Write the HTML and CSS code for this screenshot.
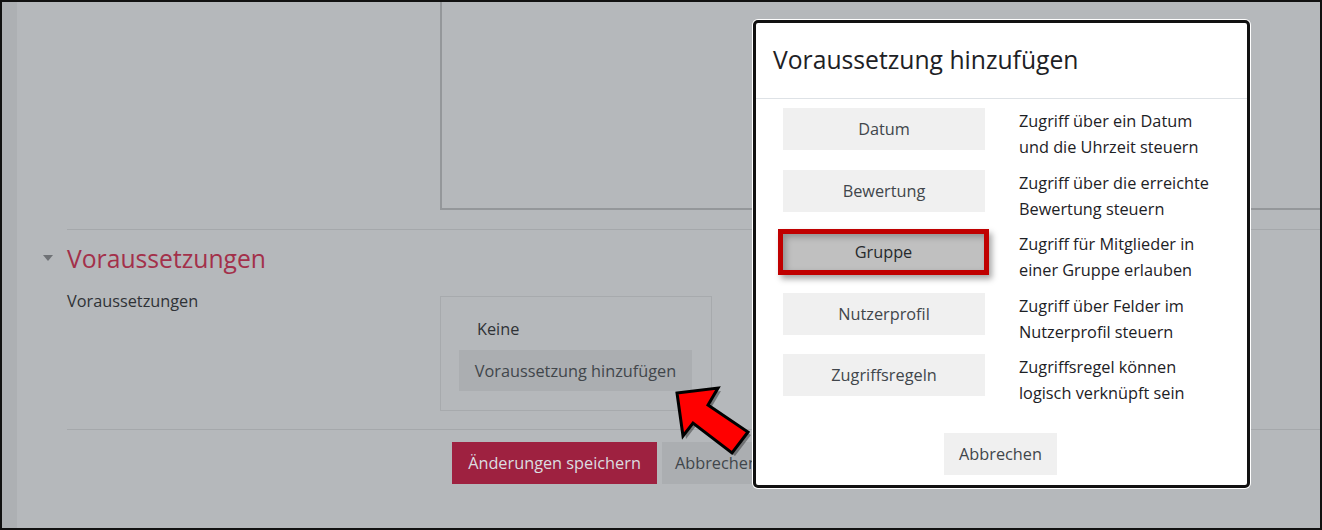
FILE: index.html
```html
<!DOCTYPE html>
<html lang="de">
<head>
    <meta charset="UTF-8">
    <title>Voraussetzung hinzufügen</title>
    <link rel="stylesheet" href="styles.css">
</head>
<body>
    <div class="frame">
        <div class="strip"></div>
        <div class="page">
            <div class="editor"></div>
            <hr class="sep">
            <div class="sec_head">
                <span class="caret"></span>
                <h3>Voraussetzungen</h3>
            </div>
            <div class="fitem">
                <div class="flabel">Voraussetzungen</div>
                <div class="avail">
                    <div class="none">Keine</div>
                    <div class="btn btn_add">Voraussetzung hinzufügen</div>
                </div>
            </div>
            <hr class="sep sep2">
            <div class="actions">
                <div class="btn btn_save">Änderungen speichern</div>
                <div class="btn btn_cancel">Abbrechen</div>
            </div>
        </div>

        <svg class="arrow" width="90" height="80" viewBox="0 0 90 80">
            <polygon class="arrow_shadow" points="10,14 51,9 41,26 81,53 65,74 26,44 16,57"/>
            <polygon points="7,11 48,6 38,23 78,50 62,71 23,41 13,54" fill="#ff0000" stroke="#000" stroke-width="3" stroke-linejoin="miter"/>
        </svg>

        <div class="modal">
            <div class="modal_head">Voraussetzung hinzufügen</div>
            <div class="modal_body">
                <div class="opt">
                    <div class="btn opt_btn">Datum</div>
                    <div class="opt_text">Zugriff über ein Datum<br>und die Uhrzeit steuern</div>
                </div>
                <div class="opt">
                    <div class="btn opt_btn">Bewertung</div>
                    <div class="opt_text">Zugriff über die erreichte<br>Bewertung steuern</div>
                </div>
                <div class="opt">
                    <div class="btn opt_btn marked">Gruppe</div>
                    <div class="opt_text">Zugriff für Mitglieder in<br>einer Gruppe erlauben</div>
                </div>
                <div class="opt">
                    <div class="btn opt_btn">Nutzerprofil</div>
                    <div class="opt_text">Zugriff über Felder im<br>Nutzerprofil steuern</div>
                </div>
                <div class="opt">
                    <div class="btn opt_btn">Zugriffsregeln</div>
                    <div class="opt_text">Zugriffsregel können<br>logisch verknüpft sein</div>
                </div>
            </div>
            <div class="modal_foot">
                <div class="btn foot_btn">Abbrechen</div>
            </div>
        </div>
    </div>
</body>
</html>
```

FILE: styles.css
```css
*{
    margin:0;padding:0;
    box-sizing: border-box;
}
html,body{
    width:100%;
    height:100%;
    background-color: #fff;
}
body{
    font-family: "Open Sans", "Noto Sans", sans-serif;
    font-size: 16.3px;
    color:#2f3236;
}
/* rahmen + abgedunkelte seite */
.frame{
    position: relative;
    display: flex;
    width:1322px;
    height:530px;
    border:2px solid #111;
    background-color: #b5b8bb;
    overflow: hidden;
}
.strip{
    width:15px;
    flex-shrink: 0;
    background-color: #adb0b3;
}
.page{
    flex:1;
    padding-left:50px;
}
.editor{
    margin-left:373px;
    margin-right:-4px;
    height:208px;
    border-left:2px solid #94979a;
    border-bottom:2px solid #94979a;
}
.sep{
    border:0;
    border-top:1px solid #a5a8ab;
    margin-top:19px;
}
.sep2{
    margin-top:18px;
}
.sec_head{
    display: flex;
    align-items: center;
    margin-left:-24px;
    margin-top:12px;
    height:32px;
}
.caret{
    width:0;height:0;
    border-left:5px solid transparent;
    border-right:5px solid transparent;
    border-top:6px solid #6f7276;
    margin-right:14px;
}
.sec_head h3{
    font-weight: normal;
    font-size: 24.7px;
    color:#a3304a;
}
.fitem{
    display: flex;
    margin-top:22px;
}
.flabel{
    width:373px;
    margin-top:-6px;
}
.avail{
    width:272px;
    height:115px;
    border:1px solid #a7aaad;
    padding:19px 18px 0 18px;
}
.none{
    padding-left:18px;
    line-height:26px;
}
.btn{
    display: flex;
    align-items: center;
    justify-content: center;
    height:42px;
    color:#41464b;
}
.btn_add{
    width:233px;
    height:41px;
    margin-top:8px;
    background-color: #abaeb1;
}
.actions{
    display: flex;
    gap:5px;
    margin-top:12px;
    padding-left:385px;
}
.btn_save{
    width:205px;
    background-color: #9e2140;
    color:#dcdde0;
}
.btn_cancel{
    width:110px;
    background-color: #abaeb1;
    justify-content: flex-start;
    padding-left:13px;
}
/* pfeil */
.arrow{
    position: absolute;
    left:668px;
    top:380px;
}
.arrow_shadow{
    fill: rgba(0,0,0,0.35);
}
/* dialog */
.modal{
    position: absolute;
    left:751px;
    top:18px;
    width:497px;
    height:468px;
    border:3px solid #111;
    border-radius: 5px;
    box-shadow: 0 0 0 1px #fff;
    background-color: #fff;
}
.modal_head{
    height:76px;
    padding:20px 0 0 17px;
    font-size: 24.7px;
    color:#1d2125;
    border-bottom:1px solid #dee2e6;
}
.modal_body{
    padding:9px 0 0 27px;
}
.opt{
    display: flex;
    height:61.5px;
}
.opt_btn{
    width:202px;
    background-color: #f0f0f0;
}
.marked{
    margin:-2px 0 0 -5px;
    width:211px;
    height:46px;
    border:5px solid #c00000;
    background-color: #c0c0c0;
    color:#26292c;
    box-shadow: inset 3px 3px 6px rgba(0,0,0,0.25), 3px 4px 6px rgba(0,0,0,0.35);
}
.marked + .opt_text{
    margin-left:30px;
}
.opt_text{
    margin-left:34px;
    margin-top:0;
    line-height:26px;
    color:#1d2125;
}
.modal_foot{
    display: flex;
    justify-content: center;
    padding-top:17px;
    padding-right:2px;
}
.foot_btn{
    width:113px;
    background-color: #f0f0f0;
}
```
